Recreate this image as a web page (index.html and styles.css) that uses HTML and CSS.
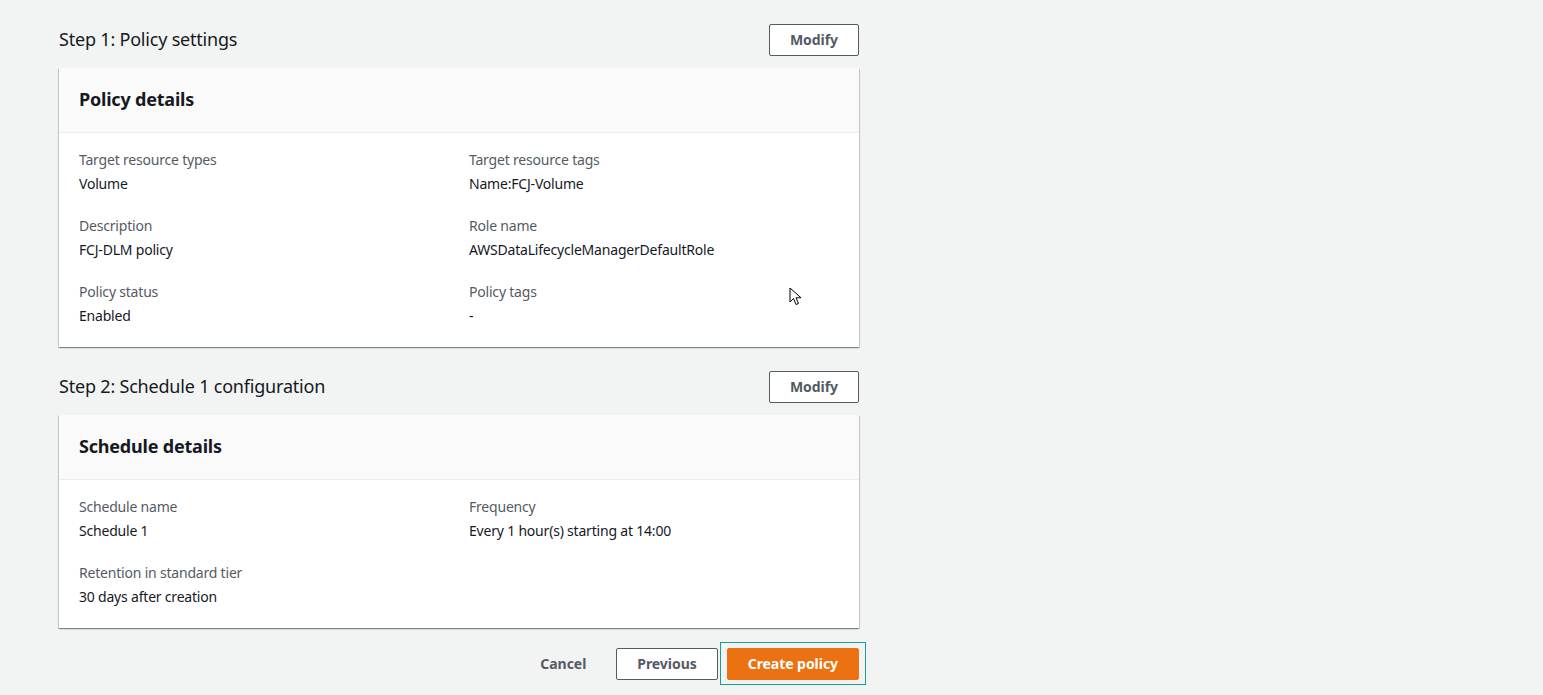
FILE: index.html
```html
<!DOCTYPE html>
<html lang="en">
<head>
    <meta charset="UTF-8">
    <meta name="viewport" content="width=device-width, initial-scale=1.0">
    <title>Review and create - Data Lifecycle Manager</title>
    <link rel="stylesheet" href="styles.css">
</head>
<body>
    <main class="review">
        <!-- Step 1 -->
        <section class="step">
            <div class="step-header">
                <h2>Step 1: Policy settings</h2>
                <button class="btn">Modify</button>
            </div>
            <div class="card">
                <div class="card-header">
                    <h3>Policy details</h3>
                </div>
                <div class="card-body">
                    <div class="field">
                        <div class="label">Target resource types</div>
                        <div class="value">Volume</div>
                    </div>
                    <div class="field">
                        <div class="label">Target resource tags</div>
                        <div class="value">Name:FCJ-Volume</div>
                    </div>
                    <div class="field">
                        <div class="label">Description</div>
                        <div class="value">FCJ-DLM policy</div>
                    </div>
                    <div class="field">
                        <div class="label">Role name</div>
                        <div class="value">AWSDataLifecycleManagerDefaultRole</div>
                    </div>
                    <div class="field">
                        <div class="label">Policy status</div>
                        <div class="value">Enabled</div>
                    </div>
                    <div class="field">
                        <div class="label">Policy tags</div>
                        <div class="value">-</div>
                    </div>
                </div>
            </div>
        </section>

        <!-- Step 2 -->
        <section class="step">
            <div class="step-header">
                <h2>Step 2: Schedule 1 configuration</h2>
                <button class="btn">Modify</button>
            </div>
            <div class="card">
                <div class="card-header">
                    <h3>Schedule details</h3>
                </div>
                <div class="card-body">
                    <div class="field">
                        <div class="label">Schedule name</div>
                        <div class="value">Schedule 1</div>
                    </div>
                    <div class="field">
                        <div class="label">Frequency</div>
                        <div class="value">Every 1 hour(s) starting at 14:00</div>
                    </div>
                    <div class="field">
                        <div class="label">Retention in standard tier</div>
                        <div class="value">30 days after creation</div>
                    </div>
                </div>
            </div>
        </section>

        <div class="actions">
            <button class="btn btn-link">Cancel</button>
            <button class="btn">Previous</button>
            <button class="btn btn-primary">Create policy</button>
        </div>
    </main>

    <!-- mouse pointer visible in the capture -->
    <svg class="pointer" width="14" height="20" viewBox="0 0 14 20">
        <path d="M1 1 L1 15 L4.5 11.5 L7 17.5 L9.5 16.5 L7 10.8 L12 10.8 Z" fill="#fff" stroke="#000" stroke-width="1"/>
    </svg>
</body>
</html>
```

FILE: styles.css
```css
:root {
    --bg-color: #f2f3f3;
    --text-color: #16191f;
    --label-color: #545b64;
    --border-color: #eaeded;
    --primary-color: #ec7211;
    --focus-color: #1b9e8c;
}

* {
    box-sizing: border-box;
    margin: 0;
    padding: 0;
}

body {
    font-family: 'Noto Sans', 'Open Sans', sans-serif;
    font-size: 14px;
    line-height: 22px;
    letter-spacing: -0.2px;
    background-color: var(--bg-color);
    color: var(--text-color);
    min-height: 100vh;
}

.review {
    width: 800px;
    margin-left: 59px;
    padding-top: 24px;
}

.step {
    margin-bottom: 24px;
}

.step-header {
    display: flex;
    justify-content: space-between;
    align-items: center;
    margin-bottom: 12px;
}

.step-header h2 {
    font-size: 18px;
    font-weight: 400;
    line-height: 22px;
    margin-top: -2px;
}

.card {
    background-color: #fff;
    box-shadow: 0 1px 1px 0 rgba(0, 28, 36, 0.3), 1px 1px 1px 0 rgba(0, 28, 36, 0.15), -1px 1px 1px 0 rgba(0, 28, 36, 0.15);
}

.card-header {
    background-color: #fafafa;
    border-bottom: 1px solid var(--border-color);
    padding: 20px 20px 22px;
}

.card-header h3 {
    font-size: 18px;
    font-weight: 700;
    line-height: 22px;
}

.card-body {
    display: grid;
    grid-template-columns: 1fr 1fr;
    column-gap: 20px;
    row-gap: 20px;
    padding: 16px 20px 20px;
}

.label {
    color: var(--label-color);
    margin-bottom: 2px;
}

.btn {
    font-family: inherit;
    font-size: 14px;
    font-weight: 700;
    line-height: 22px;
    letter-spacing: -0.05px;
    color: var(--label-color);
    background-color: #fff;
    border: 1px solid var(--label-color);
    border-radius: 2px;
    padding: 4px 20px;
    cursor: pointer;
}

.btn-link {
    background: none;
    border-color: transparent;
}

.btn-primary {
    position: relative;
    background-color: var(--primary-color);
    border-color: var(--primary-color);
    color: #fff;
}

.btn-primary::after {
    content: "";
    position: absolute;
    top: -7px;
    left: -8px;
    right: -8px;
    bottom: -6px;
    border: 1px solid var(--focus-color);
}

.actions {
    display: flex;
    justify-content: flex-end;
    align-items: center;
    gap: 9px;
    margin-top: -4px;
}

.pointer {
    position: absolute;
    top: 287px;
    left: 789px;
}
```
